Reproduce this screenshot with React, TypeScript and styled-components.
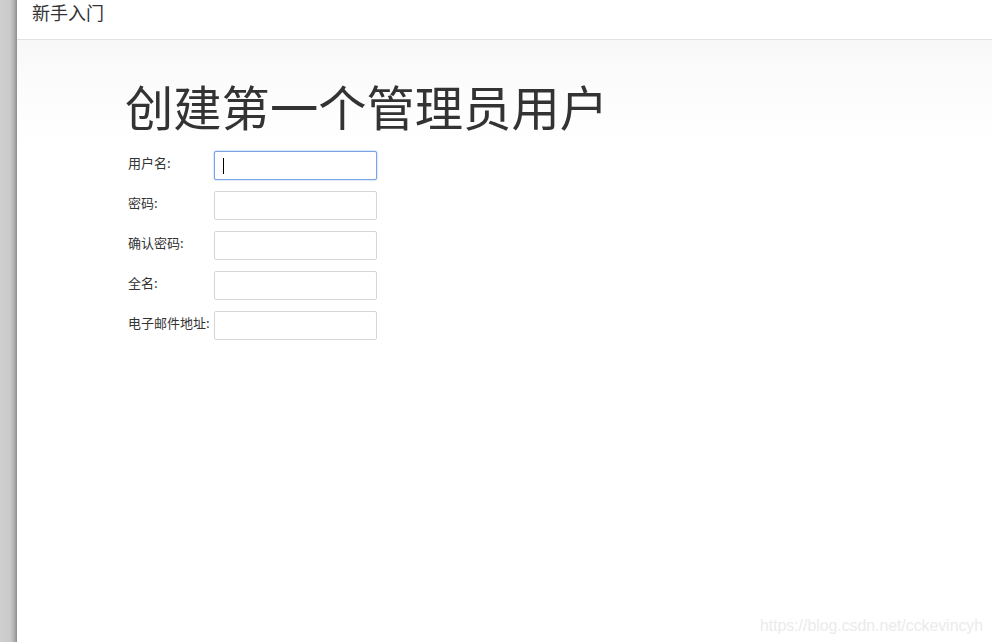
import React from "react";
import styled, { createGlobalStyle } from "styled-components";

const GlobalStyle = createGlobalStyle`
  html, body {
    margin: 0;
    padding: 0;
    height: 100%;
    background: #fff;
  }
  #root {
    height: 100%;
  }
`;

const fields = [
  { label: "用户名:", focused: true },
  { label: "密码:", focused: false },
  { label: "确认密码:", focused: false },
  { label: "全名:", focused: false },
  { label: "电子邮件地址:", focused: false },
];

const App: React.FC = () => {
  return (
    <Screen>
      <GlobalStyle />
      <SideShadow />
      <Panel>
        <Header>
          <HeaderTitle>新手入门</HeaderTitle>
        </Header>
        <Content>
          <Title>创建第一个管理员用户</Title>
          <Form>
            {fields.map((f) => (
              <Row key={f.label}>
                <Label>{f.label}</Label>
                <InputWrap>
                  <TextInput focused={f.focused} readOnly />
                  {f.focused && <Caret />}
                </InputWrap>
              </Row>
            ))}
          </Form>
        </Content>
        <Watermark>https://blog.csdn.net/cckevincyh</Watermark>
      </Panel>
    </Screen>
  );
};

const Screen = styled.div`
  display: flex;
  width: 100%;
  height: 100vh;
  overflow: hidden;
  font-family: "Noto Sans CJK SC", "Noto Sans", sans-serif;
  color: #333;
`;

const SideShadow = styled.div`
  flex: 0 0 17px;
  background: linear-gradient(
    to right,
    #d0d0d0 0%,
    #c9c9c9 60%,
    #b4b4b4 80%,
    #8e8e8e 100%
  );
`;

const Panel = styled.div`
  position: relative;
  flex: 1;
  display: flex;
  flex-direction: column;
  background: #fff;
`;

const Header = styled.div`
  height: 39px;
  border-bottom: 1px solid #e2e2e2;
  padding-left: 15px;
  background: #fff;
`;

const HeaderTitle = styled.div`
  font-size: 18px;
  line-height: 25px;
  color: #333;
`;

const Content = styled.div`
  flex: 1;
  padding: 41px 0 0 108px;
  background: linear-gradient(to bottom, #f8f8f8 0px, #fcfcfc 50px, #fff 110px);
`;

const Title = styled.h1`
  margin: 0;
  font-size: 48.3px;
  font-weight: 400;
  line-height: 48px;
  color: #333;
`;

const Form = styled.div`
  display: flex;
  flex-direction: column;
  gap: 11px;
  margin: 22px 0 0 3px;
`;

const Row = styled.div`
  display: flex;
  align-items: flex-start;
`;

const Label = styled.div`
  width: 86px;
  padding-top: 3px;
  font-size: 13px;
  line-height: 17px;
  color: #333;
  white-space: nowrap;
`;

const InputWrap = styled.div`
  position: relative;
`;

const TextInput = styled.input<{ focused: boolean }>`
  box-sizing: border-box;
  display: block;
  width: 163px;
  height: 29px;
  padding: 0 8px;
  border-radius: 2px;
  outline: none;
  background: #fff;
  border: 1px solid ${(p) => (p.focused ? "#78a3e6" : "#d6d6d6")};
  box-shadow: ${(p) => (p.focused ? "0 0 2px rgba(90, 140, 225, 0.7)" : "none")};
`;

const Caret = styled.span`
  position: absolute;
  left: 9px;
  top: 7px;
  width: 1px;
  height: 16px;
  background: #000;
`;

const Watermark = styled.div`
  position: absolute;
  right: 9px;
  bottom: 7px;
  font-family: "Liberation Sans", Arial, sans-serif;
  font-size: 15.8px;
  color: #ebebeb;
`;

export default App;
